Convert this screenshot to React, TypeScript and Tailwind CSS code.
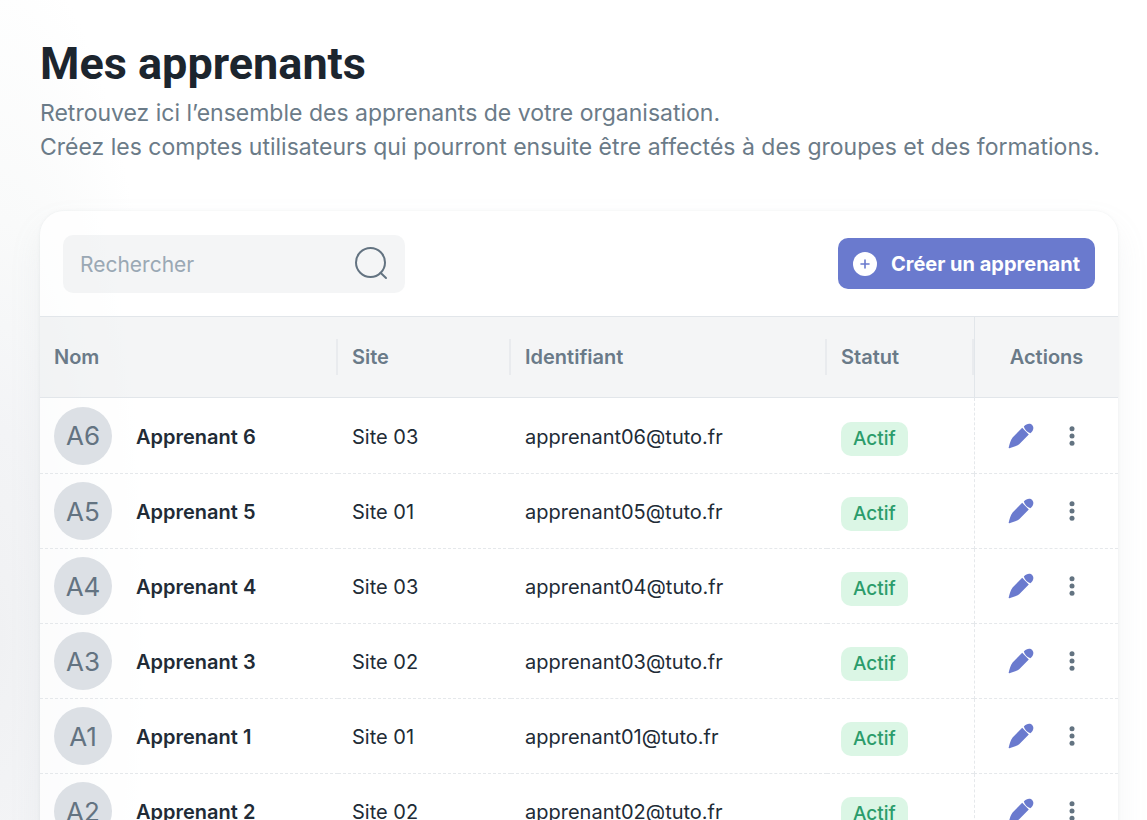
import { useState } from 'react'

type Learner = {
  id: number
  site: string
}

const learners: Learner[] = [
  { id: 6, site: 'Site 03' },
  { id: 5, site: 'Site 01' },
  { id: 4, site: 'Site 03' },
  { id: 3, site: 'Site 02' },
  { id: 1, site: 'Site 01' },
  { id: 2, site: 'Site 02' },
]

const SearchIcon = () => (
  <svg width="34" height="34" viewBox="0 0 34 34" fill="none" stroke="#637381" strokeWidth="2" strokeLinecap="round">
    <circle cx="15.5" cy="15.5" r="14.5" />
    <path d="M25.5 25.7 31 31" />
  </svg>
)

const PlusIcon = () => (
  <svg width="24" height="24" viewBox="0 0 24 24">
    <circle cx="12" cy="12" r="12" fill="#fff" />
    <path d="M12 8v8M8 12h8" stroke="#6a7ace" strokeWidth="1.6" strokeLinecap="round" />
  </svg>
)

const PencilIcon = () => (
  <svg width="26" height="26" viewBox="0 0 26 26" fill="#6a7ace">
    <path d="M14.2 4.8 20.8 11.6 11.2 21.2C8.4 23.3 4.8 24.2 1.4 25.2.8 25.3.5 25 .7 24.4 1.7 21 2.4 17 4.6 14.4Z" />
    <path d="M15.8 3.4C18.6.2 22.3-.1 24.2 1.9 26.2 4.2 25.6 7.6 22.4 10.2 19.4 9.2 17 7 15.8 3.4Z" />
  </svg>
)

const DotsIcon = () => (
  <svg width="6" height="20" viewBox="0 0 6 20" fill="#637381">
    <circle cx="3" cy="2.7" r="2.5" />
    <circle cx="3" cy="10" r="2.5" />
    <circle cx="3" cy="17.3" r="2.5" />
  </svg>
)

const HeadCell = ({ label }: { label: string }) => (
  <th scope="col" className="p-0 text-left font-semibold">
    <div className="flex h-9 items-center border-r-2 border-[#e9ebee] pl-[14px]">{label}</div>
  </th>
)

const LearnerRow = ({ id, site }: Learner) => (
  <tr className="h-[75px] text-[#212b36] first:h-[76px] *:border-b *:border-dashed *:border-[#e5e8eb]">
    <td className="pl-[14px]">
      <div className="flex items-center gap-6">
        <span className="flex size-[58px] items-center justify-center rounded-full bg-[#dce0e5] text-[26px] text-[#637381]">
          A{id}
        </span>
        <span className="pt-[2px] font-semibold">Apprenant {id}</span>
      </div>
    </td>
    <td className="pt-[2px] pl-[14px]">{site}</td>
    <td className="pt-[2px] pl-[14px]">apprenant0{id}@tuto.fr</td>
    <td className="pt-[6px] pl-[14px]">
      <span className="inline-flex h-[34px] items-center rounded-[10px] bg-[#dbf6e5] px-3 pt-px text-[19px] font-medium text-[#2b9c6b]">
        Actif
      </span>
    </td>
    <td className="border-l">
      <div className="flex items-center pl-[33px]">
        <button type="button" aria-label={`Modifier Apprenant ${id}`}>
          <PencilIcon />
        </button>
        <button type="button" aria-label={`Options Apprenant ${id}`} className="ml-[35px]">
          <DotsIcon />
        </button>
      </div>
    </td>
  </tr>
)

export default function App() {
  const [search, setSearch] = useState('')
  const rows = learners.filter((l) => `apprenant ${l.id}`.includes(search.toLowerCase()))

  return (
    <div className="h-screen overflow-hidden bg-white bg-[radial-gradient(ellipse_170px_700px_at_0_640px,#f0f1f3,#f3f4f6_30%,#f9fafa_60%,#ffffff)] pt-10 pr-[29px] pl-10 font-[Inter,sans-serif]">
      <h1 className="font-[Roboto,sans-serif] text-[45px] leading-[48px] font-bold text-[#1c252e]">Mes apprenants</h1>
      <p className="mt-2 text-[23px] leading-[34px] text-[#6b7b88]">
        Retrouvez ici l’ensemble des apprenants de votre organisation.
        <br />
        Créez les comptes utilisateurs qui pourront ensuite être affectés à des groupes et des formations.
      </p>

      <div className="mt-[47px] overflow-hidden rounded-t-[24px] bg-white/70 shadow-[0_0_3px_rgba(145,158,171,0.15),0_16px_32px_rgba(145,158,171,0.1)]">
        <div className="flex h-[105px] items-center justify-between px-[23px]">
          <label className="flex h-[58px] w-[342px] items-center rounded-[10px] bg-[#919eab]/10 pr-4 pl-[17px]">
            <input
              type="text"
              aria-label="Rechercher"
              placeholder="Rechercher"
              value={search}
              onChange={(e) => setSearch(e.target.value)}
              className="min-w-0 flex-1 pt-[2px] text-[21px] text-[#212b36] outline-0 placeholder:text-[#9aa8b4]"
            />
            <SearchIcon />
          </label>
          <button type="button" className="flex h-[51px] items-center gap-[14px] rounded-[10px] bg-[#6a7ace] px-[15px] text-[20px] font-bold text-white">
            <PlusIcon />
            Créer un apprenant
          </button>
        </div>

        <table className="w-full table-fixed border-separate border-spacing-0 text-[20px]">
          <colgroup>
            <col />
            <col className="w-[173px]" />
            <col className="w-[316px]" />
            <col className="w-[147px]" />
            <col className="w-[144px]" />
          </colgroup>
          <thead>
            <tr className="h-[82px] bg-[#919eab]/10 text-[#6a7a88] *:border-y *:border-[#e2e6ea]">
              <HeadCell label="Nom" />
              <HeadCell label="Site" />
              <HeadCell label="Identifiant" />
              <HeadCell label="Statut" />
              <th scope="col" className="border-l p-0 text-center font-semibold">
                Actions
              </th>
            </tr>
          </thead>
          <tbody>
            {rows.map((l) => (
              <LearnerRow key={l.id} {...l} />
            ))}
          </tbody>
        </table>
      </div>
    </div>
  )
}
